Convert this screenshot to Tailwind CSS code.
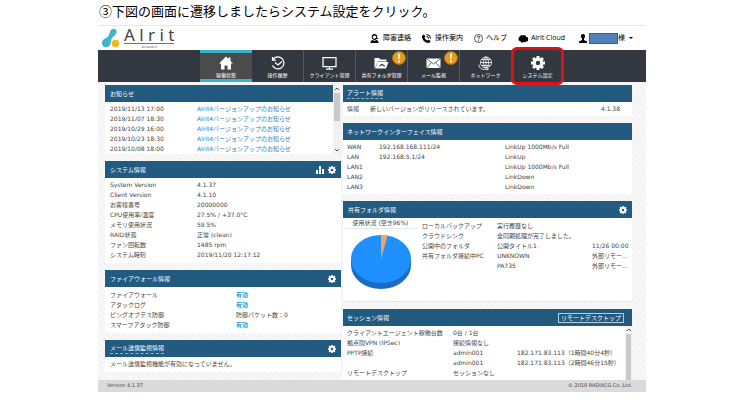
<!DOCTYPE html>
<html lang="ja">

<head>
  <meta charset="UTF-8" />
  <meta name="viewport" content="width=device-width, initial-scale=1.0" />
  <title>Alrit - 稼働状態</title>

  <script src="https://cdn.jsdelivr.net/npm/@tailwindcss/browser@4"></script>
</head>

<body class="bg-white font-['DejaVu_Sans','Noto_Sans_CJK_JP',sans-serif] text-[6px] text-[#444]">
  <!-- icons -->
  <svg class="hidden">
    <symbol id="gear" viewBox="0 0 24 24">
      <circle cx="12" cy="12" r="6.500" fill="none" stroke="currentColor" stroke-width="5.500" />
      <path d="M12 0v5M12 19v5M0 12h5M19 12h5M3.500 3.500L7 7M17 17l3.500 3.500M3.500 20.500L7 17M17 7l3.500-3.500" stroke="currentColor" stroke-width="5" />
    </symbol>
    <symbol id="alert" viewBox="0 0 24 24">
      <circle cx="12" cy="12" r="11" fill="#e99a1c" stroke="#b9770f" stroke-width="1.5" />
      <path d="M10.300 4.500h3.400l-.6 9.500h-2.200z" fill="#fff" />
      <circle cx="12" cy="17.800" r="1.900" fill="#fff" />
    </symbol>
  </svg>

  <h1 class="pl-[99px] pt-[1px] h-[25px] text-[13px] leading-[19px] text-black font-['Noto_Sans_CJK_JP',sans-serif]">③下図の画面に遷移しましたらシステム設定をクリック。</h1>

  <div class="ml-[98px] mr-[109px]">
    <header class="flex items-center justify-between h-[25px] border-t border-gray-200 pl-[3px] pr-[13px]">
      <a href="#" class="flex items-center gap-[4px]">
        <svg class="w-[19px] h-[20px]" viewBox="0 0 19 20">
          <path d="M10.500 1.500c2.500-2 6 .2 5 3.200-.8 2.800-3.300 3.300-4.600 5.500-1.500 2.600-.4 5-2.300 7.300-2 2.400-6.200 2.200-7.300-.6-1-3 .5-5 2.700-6.300C6.600 9 7.600 8.500 8.300 6c.5-1.800.7-3.300 2.200-4.500z" fill="#3fb4cb" />
          <circle cx="14.500" cy="15.500" r="3.800" fill="#f0b723" />
        </svg>
        <span class="flex flex-col items-center text-[#444]">
          <span class="w-full h-[16px] border-b border-gray-500 text-[17px] leading-[14px] font-['Noto_Sans',sans-serif] whitespace-nowrap">A l r i t</span>
          <span class="pt-[1px] text-[3px] leading-[4px]">Allround it</span>
        </span>
      </a>

      <nav class="flex items-center text-[7px] text-black font-['Open_Sans','Noto_Sans_CJK_JP',sans-serif]">
        <a href="#" class="flex items-center gap-[4px] mr-[11px]">
          <svg class="w-[9px] h-[9px]" viewBox="0 0 18 18" fill="currentColor">
            <path d="M9 0c4 0 6 2.500 5.500 6.500C14 10 12 12 9 12S4 10 3.500 6.500C3 2.500 5 0 9 0zm0 3C7 3 5.500 4.500 5.500 6S7 10 9 10s3.500-2 3.500-4S11 3 9 3z" />
            <path d="M1 18c0-4 2-6 5-6l3 2 3-2c3 0 5 2 5 6zM10 8h6v2h-6z" />
          </svg>障害連絡
        </a>
        <a href="#" class="flex items-center gap-[4px] mr-[11px]">
          <svg class="w-[9px] h-[9px]" viewBox="0 0 18 18" fill="currentColor">
            <path d="M4 1l3 4-2 2c1 3 3 5 6 6l2-2 4 3c0 2-2 4-4 4C6 18 0 11 0 5c0-2 2-4 4-4z" />
            <path d="M9 5a4 4 0 0 1 4 4M9 1a8 8 0 0 1 8 8" fill="none" stroke="currentColor" stroke-width="2" />
          </svg>操作案内
        </a>
        <a href="#" class="flex items-center gap-[3px] mr-[11px]">
          <svg class="w-[9px] h-[9px]" viewBox="0 0 18 18" fill="none" stroke="currentColor">
            <circle cx="9" cy="9" r="8" stroke-width="1.3" />
            <path d="M6.500 7c0-3.500 5-3.500 5-.5 0 2-2.500 2-2.500 4.500M9 12.500v2" stroke-width="1.6" />
          </svg>ヘルプ
        </a>
        <a href="#" class="flex items-center gap-[3px] mr-[14px] whitespace-nowrap">
          <svg class="w-[10px] h-[9px]" viewBox="0 0 20 18" fill="currentColor">
            <path d="M5 15a5 5 0 0 1-2-9 4 4 0 0 1 6-3 5 5 0 0 1 8 3 4.500 4.500 0 0 1-1 9 4 4 0 0 1-5 1 4 4 0 0 1-6-1z" />
          </svg>Alrit Cloud
        </a>
        <button type="button" class="flex items-center">
          <svg class="w-[8px] h-[9px] mr-[2px]" viewBox="0 0 16 18" fill="currentColor">
            <path d="M8 0c3 0 4.500 2 4 5-.3 2-1 3.500-2 4.500V12l6 3v3H0v-3l6-3V9.500C5 8.500 4.300 7 4 5c-.5-3 1-5 4-5z" />
          </svg>
          <span class="w-[29px] h-[11px] bg-[#4f81bd] border border-[#385d8a]"></span>
          様
          <span class="ml-[4px] border-x-2 border-t-2 border-x-transparent border-t-black"></span>
        </button>
      </nav>
    </header>

    <!-- main menu -->
    <nav class="flex h-[32px] bg-[#333740] pl-[102px] text-white text-[5px] leading-[7px] whitespace-nowrap text-center">
      <a href="#" class="w-[52px] flex flex-col items-center justify-end bg-[#4b4b4b] border-y-[3px] border-[#39b3ca]">
        <svg class="w-[14px] h-[14px] mb-[2px]" viewBox="0 0 28 28" fill="currentColor">
          <path d="M14 1l5 5V3h4v7l5 5h-4v12h-7v-8h-6v8H4V15H0z" />
        </svg>稼働状態
      </a>
      <a href="#" class="w-[52px] flex flex-col items-center justify-end pb-[3px] border-r border-[#555a62]">
        <svg class="w-[14px] h-[14px] mb-[2px]" viewBox="0 0 28 28" fill="none" stroke="currentColor" stroke-width="2.5">
          <path d="M4 7a12 12 0 1 1-1 12M3 2v6h7M8 13l6 5 8-7" />
        </svg>操作履歴
      </a>
      <a href="#" class="w-[52px] flex flex-col items-center justify-end pb-[3px] border-r border-[#555a62]">
        <svg class="w-[15px] h-[14px] mb-[2px]" viewBox="0 0 30 28" fill="none" stroke="currentColor" stroke-width="2.5">
          <path d="M2 3h26v18H2zM15 21v4M8 26h14" />
        </svg>クライアント管理
      </a>
      <a href="#" class="relative w-[52px] flex flex-col items-center justify-end pb-[3px] border-r border-[#555a62]">
        <svg class="w-[15px] h-[14px] mb-[2px]" viewBox="0 0 30 28">
          <path d="M1 25V4h9l3 3h12v4H7L2 25zM7 12h22l-5 13H3z" fill="#fff" />
          <path d="M11 20l5-3 5 3M11 20h1M16 17v-1M21 20h1" stroke="#333740" stroke-width="2.5" fill="none" />
        </svg>共有フォルダ管理
        <svg class="absolute right-[1px] top-[1px] w-[14px] h-[14px]"><use href="#alert" /></svg>
      </a>
      <a href="#" class="relative w-[52px] flex flex-col items-center justify-end pb-[3px] border-r border-[#555a62]">
        <svg class="w-[15px] h-[14px] mb-[2px]" viewBox="0 0 30 28">
          <path d="M1 5h28v19H1z" fill="#fff" />
          <path d="M1 5l14 11L29 5M1 24l10-11M29 24L19 13" stroke="#333740" stroke-width="1.5" fill="none" />
        </svg>メール監視
        <svg class="absolute right-[1px] top-[1px] w-[14px] h-[14px]"><use href="#alert" /></svg>
      </a>
      <a href="#" class="w-[52px] flex flex-col items-center justify-end pb-[3px] border-r border-[#555a62]">
        <svg class="w-[15px] h-[15px] mb-[1px]" viewBox="0 0 30 30" fill="none" stroke="currentColor" stroke-width="1.6">
          <circle cx="16" cy="13" r="11" />
          <ellipse cx="16" cy="13" rx="5" ry="11" />
          <path d="M16 2v22M5 13h22M7 7h18M7 19h18M2 17c-1 8 8 12 18 9M17 23l4 3-3 3" />
        </svg>ネットワーク
      </a>
      <a href="#" class="relative w-[52px] flex flex-col items-center justify-end pb-[3px] border-r border-[#555a62]">
        <svg class="w-[14px] h-[14px] mb-[2px]"><use href="#gear" /></svg>システム設定
        <span class="absolute -inset-x-[1px] -inset-y-[3px] border-[3px] border-[#dd1117] rounded-[6px]"></span>
      </a>
    </nav>

    <main class="grid grid-cols-[236fr_289fr] gap-x-[2px] pl-[7px] pr-[14px] pt-[3px] bg-[#f5f5f5] bg-[repeating-linear-gradient(45deg,#f8f8f8_0px,#f8f8f8_2px,#f3f3f3_2px,#f3f3f3_4px)] leading-[10px] whitespace-nowrap">
      <div class="flex flex-col gap-[7px] pb-[8px]">
        <section class="flex bg-white">
          <div class="flex-1">
            <h2 class="h-[17px] flex items-center px-[5px] bg-[#225a80] text-white">お知らせ</h2>
            <div class="px-[5px] pt-[2px]">
              <table class="w-full table-fixed">
                <tr><td class="w-[87px]">2019/11/13 17:00</td><td><a href="#" class="text-[#3a7eaf]">Alrit4バージョンアップのお知らせ</a></td></tr>
                <tr><td>2019/11/07 18:30</td><td><a href="#" class="text-[#3a7eaf]">Alrit4バージョンアップのお知らせ</a></td></tr>
                <tr><td>2019/10/29 16:00</td><td><a href="#" class="text-[#3a7eaf]">Alrit4バージョンアップのお知らせ</a></td></tr>
                <tr><td>2019/10/23 18:30</td><td><a href="#" class="text-[#3a7eaf]">Alrit4バージョンアップのお知らせ</a></td></tr>
                <tr><td>2019/10/08 18:00</td><td><a href="#" class="text-[#3a7eaf]">Alrit4バージョンアップのお知らせ</a></td></tr>
              </table>
            </div>
          </div>
          <div class="w-[8px] bg-[#f1f1f1] flex flex-col items-center">
            <svg class="w-[4px] h-[8px]" viewBox="0 0 4 8" fill="none" stroke="#555"><path d="M0 5l2-2 2 2" /></svg>
            <span class="w-[6px] h-[28px] bg-[#c9c9c9]"></span>
            <svg class="w-[4px] h-[8px] mt-auto" viewBox="0 0 4 8" fill="none" stroke="#555"><path d="M0 3l2 2 2-2" /></svg>
          </div>
        </section>

        <section class="bg-white">
          <div class="h-[17px] flex items-center gap-[4px] px-[5px] bg-[#225a80] text-white">
            <h2 class="mr-auto">システム情報</h2>
            <svg class="w-[8px] h-[8px]" viewBox="0 0 8 8" fill="currentColor"><path d="M0 4h2v4H0zM3 0h2v8H3zM6 3h2v5H6z" /></svg>
            <button type="button" aria-label="設定"><svg class="w-[8px] h-[8px]"><use href="#gear" /></svg></button>
          </div>
          <div class="px-[5px] pt-[2px] pb-[3px]">
            <table class="w-full table-fixed">
              <tr><td class="w-[87px]">System Version</td><td>4.1.37</td></tr>
              <tr><td>Client Version</td><td>4.1.10</td></tr>
              <tr><td>お客様番号</td><td>20000000</td></tr>
              <tr><td>CPU使用率/温度</td><td>27.5% / +37.0°C</td></tr>
              <tr><td>メモリ使用状況</td><td>59.5%</td></tr>
              <tr><td>RAID状態</td><td>正常 (clean)</td></tr>
              <tr><td>ファン回転数</td><td>1485 rpm</td></tr>
              <tr><td>システム時刻</td><td>2019/11/20 12:17:12</td></tr>
            </table>
          </div>
        </section>

        <section class="bg-white">
          <div class="h-[17px] flex items-center justify-between px-[5px] bg-[#225a80] text-white">
            <h2>ファイアウォール情報</h2>
            <button type="button" aria-label="設定"><svg class="w-[8px] h-[8px]"><use href="#gear" /></svg></button>
          </div>
          <div class="px-[5px] pt-[3px] pb-[3px]">
            <table class="w-full table-fixed">
              <tr><td class="w-[126px]">ファイアウォール</td><td class="text-[#1aa3d9] font-bold">有効</td></tr>
              <tr><td>アタックログ</td><td class="text-[#1aa3d9] font-bold">有効</td></tr>
              <tr><td>ピングオブデス防御</td><td>防御パケット数：0</td></tr>
              <tr><td>スマーフアタック防御</td><td class="text-[#1aa3d9] font-bold">有効</td></tr>
            </table>
          </div>
        </section>

        <section class="bg-white">
          <div class="h-[17px] flex items-center justify-between px-[5px] bg-[#225a80] text-white">
            <h2 class="border-b border-dashed border-[#8fb0c8]">メール送信監視情報</h2>
            <button type="button" aria-label="設定"><svg class="w-[8px] h-[8px]"><use href="#gear" /></svg></button>
          </div>
          <p class="px-[5px] pt-[2px] pb-[3px]">メール送信監視機能が有効になっていません。</p>
        </section>
      </div>

      <div class="flex flex-col gap-[7px]">
        <section class="bg-white">
          <div class="h-[17px] flex items-center px-[4px] bg-[#225a80] text-white">
            <h2 class="border-b border-dashed border-[#8fb0c8]">アラート情報</h2>
          </div>
          <div class="flex px-[4px] py-[2px]">
            <span class="w-[23px]">情報</span>
            <span>新しいバージョンがリリースされています。</span>
            <span class="ml-auto mr-[8px]">4.1.38</span>
          </div>
        </section>

        <section class="bg-white">
          <h2 class="h-[17px] flex items-center px-[4px] bg-[#225a80] text-white">ネットワークインターフェイス情報</h2>
          <div class="px-[4px] pt-[2px] pb-[2px]">
            <table class="w-full table-fixed">
              <tr><td class="w-[32px]">WAN</td><td class="w-[126px]">192.168.168.111/24</td><td>LinkUp 1000Mb/s Full</td></tr>
              <tr><td>LAN</td><td>192.168.5.1/24</td><td>LinkUp</td></tr>
              <tr><td>LAN1</td><td></td><td>LinkUp 1000Mb/s Full</td></tr>
              <tr><td>LAN2</td><td></td><td>LinkDown</td></tr>
              <tr><td>LAN3</td><td></td><td>LinkDown</td></tr>
            </table>
          </div>
        </section>

        <section class="bg-white border-b border-gray-200">
          <div class="h-[17px] flex items-center justify-between px-[5px] bg-[#225a80] text-white">
            <h2>共有フォルダ情報</h2>
            <button type="button" aria-label="設定"><svg class="w-[8px] h-[8px]"><use href="#gear" /></svg></button>
          </div>
          <div class="flex pb-[11px]">
            <div class="w-[75px] flex flex-col items-center">
              <p class="w-full text-center border-b border-gray-200">使用状況 (空き96%)</p>
              <svg class="w-[62px] h-[56px] mt-[5px]" viewBox="0 0 62 56">
                <path d="M1 25v6a30 24 0 0 0 60 0v-6z" fill="#1b6cc0" />
                <ellipse cx="31" cy="25" rx="30" ry="24" fill="#1e90ff" />
                <path d="M31 25V1a30 24 0 0 1 6.500 .6z" fill="#f4a460" />
              </svg>
            </div>
            <div class="flex-1 pl-[4px] pt-[3px]">
              <table class="w-full table-fixed">
                <tr><td class="w-[75px]">ローカルバックアップ</td><td class="w-[95px]">実行履歴なし</td><td></td></tr>
                <tr><td>クラウドシンク</td><td>全同期処理が完了しました。</td><td></td></tr>
                <tr><td>公開中のフォルダ</td><td>公開タイトル1</td><td>11/26 00:00</td></tr>
                <tr><td>共有フォルダ接続中PC</td><td>UNKNOWN</td><td>外部リモー...</td></tr>
                <tr><td></td><td>PA735</td><td>外部リモー...</td></tr>
              </table>
            </div>
          </div>
        </section>

        <section class="flex-1 flex flex-col bg-white">
          <div class="h-[17px] flex items-center justify-between pl-[4px] pr-[8px] bg-[#225a80] text-white">
            <h2>セッション情報</h2>
            <button type="button" class="border border-[#b9cddb] px-[2px] leading-[8px]">リモートデスクトップ</button>
          </div>
          <div class="flex-1 flex">
            <div class="flex-1 pl-[4px] pt-[2px]">
              <table class="w-full table-fixed">
                <tr><td class="w-[106px]">クライアントエージェント稼働台数</td><td class="w-[64px]">0台 / 1台</td><td></td></tr>
                <tr><td>拠点間VPN (IPSec)</td><td>接続情報なし</td><td></td></tr>
                <tr><td>PPTP接続</td><td>admin001</td><td>182.171.83.113（1時間40分4秒）</td></tr>
                <tr><td></td><td>admin001</td><td>182.171.83.113（2時間46分15秒）</td></tr>
                <tr><td>リモートデスクトップ</td><td>セッションなし</td><td></td></tr>
              </table>
            </div>
            <div class="w-[7px] bg-[#f1f1f1] flex flex-col items-center">
              <svg class="w-[4px] h-[8px]" viewBox="0 0 4 8" fill="none" stroke="#555"><path d="M0 5l2-2 2 2" /></svg>
              <span class="w-[5px] flex-1 bg-[#c9c9c9]"></span>
            </div>
          </div>
        </section>
      </div>
    </main>

    <footer class="flex items-center justify-between h-[12px] bg-[#dadada] pl-[9px] pr-[14px] text-[5px]">
      <span>Version 4.1.37</span>
      <span>© 2018 RADIXCG Co.,Ltd.</span>
    </footer>
  </div>
</body>

</html>
